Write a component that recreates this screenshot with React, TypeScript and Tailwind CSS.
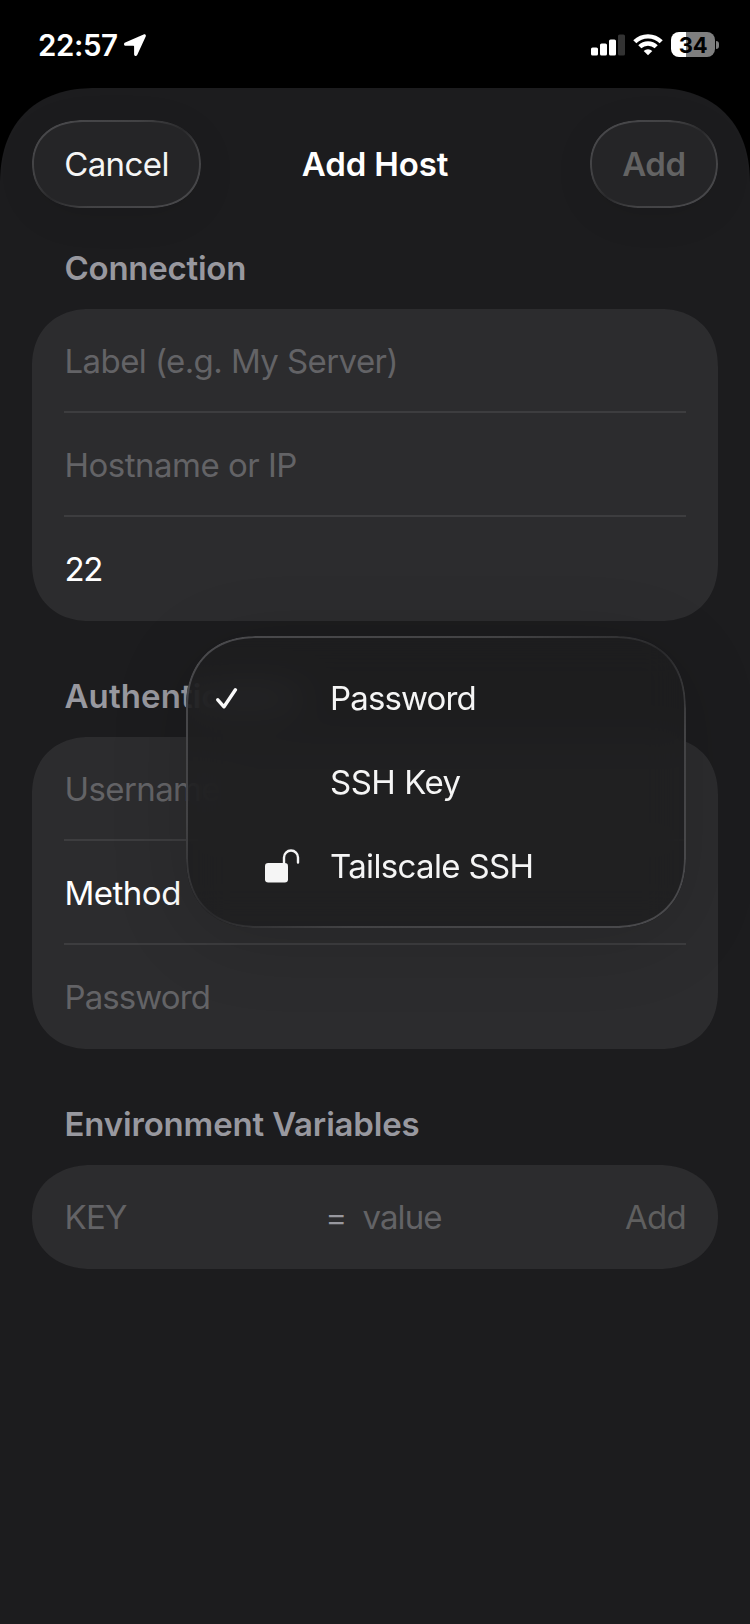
import React from 'react';

interface FieldRowProps {
  children: React.ReactNode;
  last?: boolean;
  className?: string;
}

const FieldRow: React.FC<FieldRowProps> = ({ children, last = false, className = '' }) => (
  <div
    className={`flex h-[104px] items-center pt-1 border-b-2 text-[33px] indent-[0.5px] ${
      last ? 'border-transparent' : 'border-[#3d3d3f]'
    } ${className}`}
  >
    {children}
  </div>
);

const SectionTitle: React.FC<{ children: React.ReactNode; className?: string }> = ({
  children,
  className = '',
}) => (
  <h2 className={`pl-[32.5px] text-[33px] leading-10 font-semibold text-[#98989f] ${className}`}>
    {children}
  </h2>
);

const Card: React.FC<{ children: React.ReactNode; className?: string }> = ({
  children,
  className = 'rounded-[58px] [corner-shape:superellipse(1.15)]',
}) => (
  <div className={`mt-[21px] bg-[#2c2c2e] px-8 ${className}`}>
    {children}
  </div>
);

// Thin glass edge, lit from the top left and bottom right
const GlassEdge: React.FC<{ className?: string }> = ({ className = '' }) => (
  <span
    className={`pointer-events-none absolute inset-0 p-[2px] [corner-shape:inherit] bg-[linear-gradient(to_bottom_right,#4a4a4d_0%,#424244_32%,#29292b_50%,#424244_66%,#4a4a4d_100%)] [mask:linear-gradient(#000_0_0)_content-box_exclude,linear-gradient(#000_0_0)] ${className}`}
  />
);

const StatusBar: React.FC = () => (
  <div className="flex h-[88px] items-start justify-between pl-[38px] pr-[31px] pt-7">
    <div className="flex items-center">
      <span className="w-[86px] text-[29.5px] leading-[34px] font-semibold tracking-[-0.4px]">
        22:57
      </span>
      <svg className="h-[22px] w-[22px]" viewBox="0 0 22 22" fill="#fff">
        <path d="M19.600.400 1.200 8.600C-.6 9.400-.3 11.800 1.600 11.800H9.400c.5 0 .7.200.7.700v7.700c0 2 2.300 2.400 3.100.700L21.700 2.400C22.300.900 21.100-.300 19.600.400Z" />
      </svg>
    </div>
    <div className="flex items-center pt-1">
      <svg className="h-[22px] w-[34px]" viewBox="0 0 34 22" fill="#fff">
        <rect x="0" y="13.500" width="7" height="8" rx="1.6" />
        <rect x="9" y="9.500" width="7" height="12" rx="1.6" />
        <rect x="18" y="5.500" width="7" height="16" rx="1.6" />
        <rect x="27" y="0.500" width="7" height="21" rx="1.6" fill="#333" />
      </svg>
      <svg className="ml-2 h-[22px] w-[30px]" viewBox="0 0 30 22" fill="none" stroke="#fff" strokeWidth="4.400">
        <path d="M1.800 7.800a18.800 18.800 0 0 1 26.400 0" />
        <path d="M6.800 12.800a11.700 11.700 0 0 1 16.400 0" />
        <path d="M15 21.200l-4.300-4.300a6.200 6.200 0 0 1 8.600 0Z" fill="#fff" stroke="none" />
      </svg>
      <div className="ml-2 flex items-center gap-[1px]">
        <div className="flex h-[25px] w-11 items-center justify-center rounded-[8px] bg-[linear-gradient(to_right,#fff_34%,#7f7f7f_34%)] text-[22px] leading-none font-bold tracking-[-0.3px] text-black">
          34
        </div>
        <div className="h-2 w-[3px] rounded-r-full bg-[#7f7f7f]" />
      </div>
    </div>
  </div>
);

const NavBar: React.FC = () => (
  <div className="flex h-[88px] items-center justify-between">
    <button className="relative h-[88px] w-[169px] rounded-[52px/44px] [corner-shape:superellipse(1.15)] bg-[#252527] pt-0.5 text-[33px] tracking-[-0.6px] text-[#f5f5f5] shadow-[0_8px_40px_rgba(0,0,0,0.08)]">
      <GlassEdge className="rounded-[52px/44px]" />
      Cancel
    </button>
    <h1 className="-translate-x-[20.5px] pt-0.5 text-[33px] font-semibold tracking-[-0.15px]">Add Host</h1>
    <button className="relative h-[88px] w-32 rounded-[52px/44px] [corner-shape:superellipse(1.15)] bg-[#252527] pt-0.5 text-[33px] font-semibold tracking-[-0.4px] text-[#636363] shadow-[0_8px_40px_rgba(0,0,0,0.08)]">
      <GlassEdge className="rounded-[52px/44px]" />
      Add
    </button>
  </div>
);

const CheckIcon = () => (
  <svg className="h-[22px] w-[22px]" viewBox="0 0 22 22" fill="none" stroke="#fafafa" strokeWidth="3.400" strokeLinecap="round" strokeLinejoin="round">
    <path d="M1.800 11.800 8 18.800 19.400 1.800" />
  </svg>
);

const LockOpenIcon = () => (
  <svg className="h-[34px] w-[35px]" viewBox="0 0 35 34" fill="none">
    <rect x="0" y="14" width="23" height="19.500" rx="3.200" fill="#f5f5f5" />
    <path d="M19 15V8.500a7 7 0 0 1 14 0v5" stroke="#f5f5f5" strokeWidth="2.400" strokeLinecap="round" />
  </svg>
);

const methods = [
  { label: 'Password', selected: true, icon: null, spacing: 'tracking-[-0.85px]' },
  { label: 'SSH Key', selected: false, icon: null, spacing: 'tracking-[-0.5px]' },
  { label: 'Tailscale SSH', selected: false, icon: <LockOpenIcon />, spacing: 'tracking-[-0.65px]' },
];

const MethodMenu: React.FC = () => (
  <div className="absolute left-[186px] top-[548px] h-[292px] w-[500px] rounded-[72px] [corner-shape:superellipse(1.2)] bg-[#1d1d1e]/82 pt-5 text-[33px] text-[#f5f5f5] shadow-[0_12px_80px_rgba(0,0,0,0.14)] backdrop-blur-[18px]">
    <GlassEdge className="rounded-[72px]" />
    {methods.map(({ label, selected, icon, spacing }) => (
      <div key={label} className="flex h-[84px] items-center pl-[30px]">
        <span className="w-[49px] pt-0.5">{selected && <CheckIcon />}</span>
        <span className="w-[65px]">{icon}</span>
        <span className={`pt-0.5 ${spacing}`}>{label}</span>
      </div>
    ))}
  </div>
);

const App: React.FC = () => {
  return (
    <div className="h-[1624px] w-[750px] overflow-hidden bg-black font-[Inter,'Liberation_Sans',sans-serif] text-white">
      <StatusBar />
      <main className="relative h-[1536px] rounded-t-[96px] [corner-shape:superellipse(1.2)] bg-[#1c1c1e] px-8 pt-8">
        <NavBar />

        <SectionTitle className="mt-10 tracking-[-0.25px]">Connection</SectionTitle>
        <Card>
          <FieldRow className="tracking-[-0.58px] text-[#636366]">Label (e.g. My Server)</FieldRow>
          <FieldRow className="tracking-[-0.5px] text-[#636366]">Hostname or IP</FieldRow>
          <FieldRow className="tracking-[-1.5px]" last>22</FieldRow>
        </Card>

        <SectionTitle className="mt-[55px] tracking-[0.1px]">Authentication</SectionTitle>
        <Card>
          <FieldRow className="tracking-[-0.6px] text-[#636366]">Username</FieldRow>
          <FieldRow className="tracking-[-0.5px]">Method</FieldRow>
          <FieldRow className="tracking-[-0.9px] text-[#636366]" last>Password</FieldRow>
        </Card>

        <SectionTitle className="mt-[55px] tracking-[-0.17px]">Environment Variables</SectionTitle>
        <Card className="rounded-[60px/52px] [corner-shape:superellipse(1.1)]">
          <FieldRow className="text-[#636366]" last>
            <span className="w-[260px] tracking-[-0.7px]">KEY</span>
            <span className="w-[38px] pb-0.5 text-[36px] font-light text-[#98989f]">=</span>
            <span className="flex-1 tracking-[-0.9px]">value</span>
            <span className="tracking-[-0.7px] text-[#5f5f5f]">Add</span>
          </FieldRow>
        </Card>

        <MethodMenu />
      </main>
    </div>
  );
};

export default App;
